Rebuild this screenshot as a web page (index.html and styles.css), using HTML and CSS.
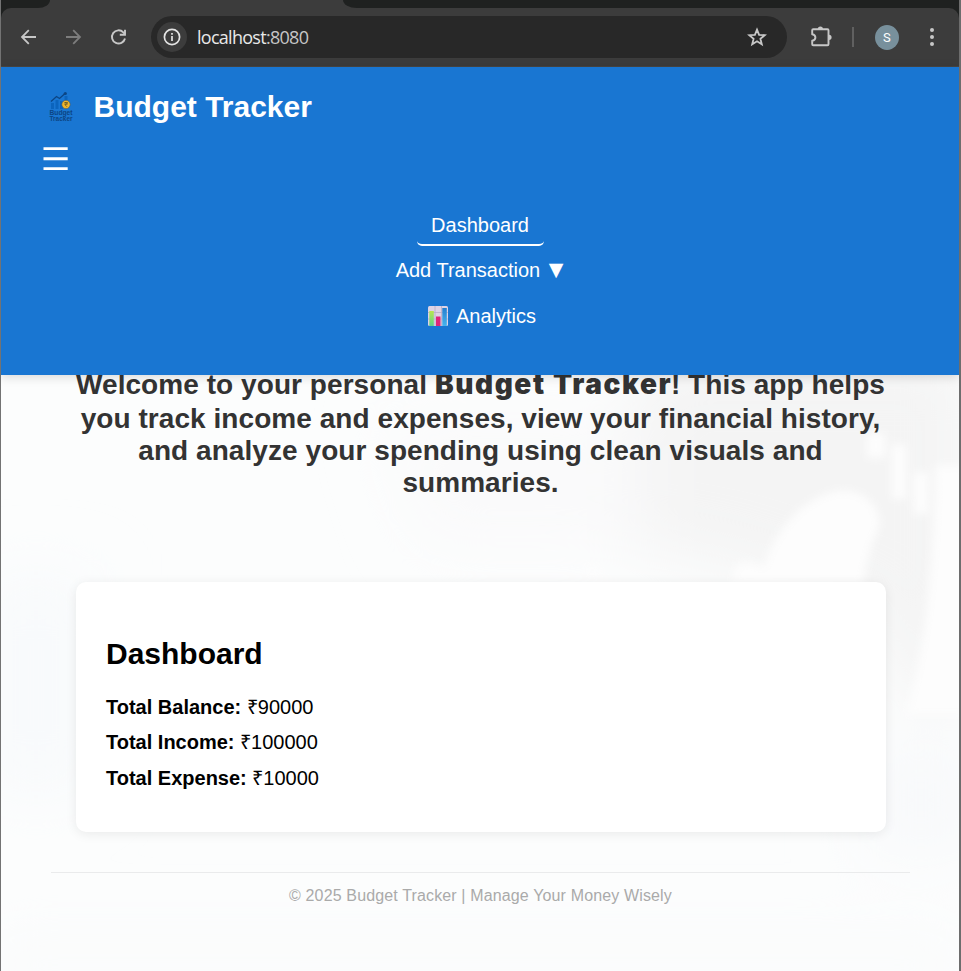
FILE: index.html
```html
<!DOCTYPE html>
<html lang="en">
<head>
<meta charset="utf-8">
<title>Budget Tracker</title>
<link rel="stylesheet" href="styles.css">
</head>
<body>
<div class="window">
  <div class="tabstrip"><div class="tab-left"></div><div class="tab-active"></div><div class="tab-rest"></div></div>
  <div class="toolbar">
    <svg class="ic back" width="20" height="20" viewBox="0 0 20 20" fill="none" stroke="#c7c7c7" stroke-width="1.8"><path d="M17 10H3.5M9.800 3.200L3 10l6.800 6.800"/></svg>
    <svg class="ic forward" width="20" height="20" viewBox="0 0 20 20" fill="none" stroke="#7d7d7d" stroke-width="1.8"><path d="M2 10h13.500M9.200 3.200L16 10l-6.800 6.800"/></svg>
    <svg class="ic reload" width="20" height="20" viewBox="0 0 20 20" fill="none" stroke="#c7c7c7" stroke-width="1.9"><path d="M16 11.500A6.600 6.600 0 1 1 14.300 5.300L16 7"/><path d="M16 2.700v5.100h-5.200"/></svg>
    <div class="omnibox">
      <span class="info"><svg width="18" height="18" viewBox="0 0 18 18" fill="none" stroke="#e3e3e3" stroke-width="1.7"><circle cx="9" cy="9" r="7.6"/><path d="M9 8v5M9 4.9v1.9"/></svg></span>
      <span class="url">localhost<span class="port">:8080</span></span>
      <svg class="star" width="20" height="20" viewBox="0 0 20 20" fill="none" stroke="#c7c7c7" stroke-width="1.8"><path d="M10 2.6l2.1 5.2 5.6.4-4.3 3.6 1.4 5.5-4.8-3-4.8 3 1.4-5.5-4.3-3.6 5.6-.4z"/></svg>
    </div>
    <svg class="ext" width="24" height="24" viewBox="0 0 24 24"><path d="M4.200 4.300h14.300q1 0 1 1v13.900q0 1-1 1H4.200q-1 0-1-1v-3.400q3.200-.6 3.200-3.300T3.200 9.200V5.300q0-1 1-1z" fill="none" stroke="#c7c7c7" stroke-width="1.9" stroke-linejoin="round"/><path d="M8.800 4a2.600 2.600 0 0 1 5.200 0zM20 9.700a2.600 2.600 0 0 1 0 5.200z" fill="#c7c7c7"/></svg>
    <span class="divider"></span>
    <span class="avatar">S</span>
    <svg class="kebab" width="6" height="20" viewBox="0 0 6 20" fill="#c7c7c7"><circle cx="3" cy="3" r="2"/><circle cx="3" cy="10" r="2"/><circle cx="3" cy="17" r="2"/></svg>
  </div>
  <header class="header">
    <div class="brand">
      <svg class="logo" width="26" height="32" viewBox="0 0 26 32">
        <g fill="#0b64bd"><path d="M3 12h3v6H3zM7.500 9h3v9h-3zM12 10h3v8h-3zM16.500 5h3v5h-3z"/></g>
        <path d="M3 10.500L8.500 5.500l3 2L17 2.500" fill="none" stroke="#0c4584" stroke-width="1.300"/><circle cx="17.300" cy="2.500" r="1.600" fill="#0c4584"/>
        <circle cx="18" cy="13.500" r="4.200" fill="#efb52b" stroke="#40566b" stroke-width=".6"/>
        <path d="M16.300 11.500h3.600M16.300 13h3.600M17 11.500q4 1.200 0 2.300l2 2" fill="none" stroke="#5c5128" stroke-width=".7"/>
        <text x="1.500" y="23.500" textLength="23" lengthAdjust="spacingAndGlyphs">Budget</text><text x="1.500" y="29.700" textLength="23" lengthAdjust="spacingAndGlyphs">Tracker</text>
      </svg>
      <h1>Budget Tracker</h1>
    </div>
    <svg class="menu" width="26" height="26" viewBox="0 0 26 26" fill="#fff"><path d="M.500 1.200h24.200v2.900H.500zM.500 11.300h24.200v2.900H.500zM.500 21.200h24.200v2.900H.500z"/></svg>
    <nav class="nav">
      <a class="link active">Dashboard</a>
      <a class="link add">Add Transaction <span class="caret">▼</span></a>
      <a class="link analytics"><svg width="20" height="20" viewBox="0 0 20 20"><defs><linearGradient id="g" x2="0" y2="1"><stop stop-color="#b7e84f"/><stop offset="1" stop-color="#5ed08a"/></linearGradient><linearGradient id="b" x2="0" y2="1"><stop stop-color="#237fd0"/><stop offset="1" stop-color="#46b4ee"/></linearGradient></defs><rect width="20" height="20" rx="1.500" fill="#ddd3e5"/><path d="M0 6.500h20M0 13h20M7 0v20M13.500 0v20" stroke="#b9adc6" stroke-width=".8"/><path d="M1.300 5h4.500v15H1.300z" fill="url(#g)"/><path d="M8 10.500h4.500V20H8z" fill="#e0257a"/><path d="M14.300 2h4.500v18h-4.500z" fill="url(#b)"/></svg>Analytics</a>
    </nav>
  </header>
  <main class="page">
    <svg class="backdrop" viewBox="0 0 958 596" preserveAspectRatio="none">
      <defs>
        <filter id="soft" x="-30%" y="-30%" width="160%" height="160%"><feGaussianBlur stdDeviation="32"/></filter>
        <filter id="edge"><feGaussianBlur stdDeviation="4"/></filter>
      </defs>
      <rect width="958" height="596" fill="#fcfdfd"/>
      <g filter="url(#soft)">
        <path d="M640-20H970V330H900L870 240 720 190 600 170z" fill="#f4f4f4"/>
        <path d="M380 40h260v130H420z" fill="#fafafb"/>
        <path d="M-20 200h110v220H-20z" fill="#f8fafc"/>
        <path d="M860 370h120v110H860z" fill="#f8f9fb"/>
        <path d="M-20 560h990v60H-20z" fill="#fafbfc"/>
      </g>
      <g fill="#fdfdfd" filter="url(#edge)">
        <path d="M735 190q12-6 28 3 8-32 34-57 35-29 62-17 22 12 19 34-12 24-16 57H730z"/>
        <path d="M891 69h14v55h-14zM913 97h14v42h-14zM866 58h18v25h-18zM935 90h30v250h-60q28-100 30-250z"/>
        <circle cx="591" cy="196" r="9"/>
      </g>
    </svg>
    <p class="intro">Welcome to your personal <strong>Budget Tracker</strong>! This app helps<br>you track income and expenses, view your financial history,<br>and analyze your spending using clean visuals and<br>summaries.</p>
    <section class="card">
      <h2>Dashboard</h2>
      <p><b>Total Balance:</b> ₹90000</p>
      <p><b>Total Income:</b> ₹100000</p>
      <p><b>Total Expense:</b> ₹10000</p>
    </section>
    <footer class="footer">© 2025 Budget Tracker | Manage Your Money Wisely</footer>
  </main>
</div>
</body>
</html>
```
FILE: styles.css
```css
* { box-sizing: border-box; }
body { margin: 0; font-family: "Liberation Sans", Arial, sans-serif; }
h1, h2, p { margin: 0; }
.window { width: 961px; height: 971px; overflow: hidden; display: flex; flex-direction: column; border-left: 1px solid #737373; border-right: 2px solid #6d6d6d; background: #1f2120; }
.tabstrip { height: 8px; flex: none; display: flex; background: #3c3c3c; }
.tab-left { width: 49px; background: #1f2120; border-bottom-right-radius: 12px 8px; }
.tab-active { width: 293px; }
.tab-rest { flex: 1; background: #1f2120; border-bottom-left-radius: 14px 8px; }
.toolbar { height: 59px; flex: none; display: flex; align-items: center; background: #3c3c3c; border-radius: 10px 10px 0 0; border-bottom: 1px solid #484644; padding: 0 24px 0 18px; }
.ic { flex: none; margin-right: 25px; }
.reload { margin-right: 22px; }
.omnibox { width: 636px; height: 42px; border-radius: 21px; background: #282828; display: flex; align-items: center; padding: 0 20px 0 6px; flex: none; }
.info { width: 30px; height: 30px; border-radius: 50%; background: #3c3c3c; display: flex; align-items: center; justify-content: center; }
.url { flex: 1; margin-left: 10px; font: 18px "Open Sans", "Noto Sans", sans-serif; letter-spacing: -.72px; color: #e8e8e8; }
.port { color: #c6c6c6; }
.ext { margin-left: 22px; flex: none; }
.divider { width: 2px; height: 20px; background: #606060; margin-left: 19px; }
.avatar { width: 25px; height: 25px; border-radius: 50%; background: #78909c; color: #fff; font: 13px/25px Roboto, sans-serif; text-align: center; margin-left: 21px; }
.kebab { margin-left: 30px; flex: none; }
.header { height: 308px; flex: none; background: #1976d2; color: #fff; padding: 24px 40px 0; box-shadow: 0 2px 10px rgba(0,0,0,.15); position: relative; z-index: 1; }
.brand { display: flex; align-items: center; height: 32px; padding-left: 7px; gap: 19.500px; }
.logo text { font: bold 6.500px "Liberation Sans", sans-serif; fill: #0c4584; }
.brand h1 { font-size: 30px; line-height: 34px; }
.menu { display: block; margin: 23px 0 0 2px; }
.nav { display: flex; flex-direction: column; align-items: center; margin-top: 33px; font-size: 20px; line-height: 24px; }
.link { display: flex; align-items: center; white-space: pre; }
.active { width: 127px; height: 41px; justify-content: center; border-bottom: 2px solid #fff; border-radius: 5px; }
.add { margin-top: 11px; height: 25px; }
.caret { font: 19px/22px "DejaVu Sans", sans-serif; margin: -2px 0 0 3px; padding-right: 1px; }
.analytics { margin-top: 22px; gap: 8px; height: 24px; padding-left: 4px; }
.page { flex: 1; position: relative; padding: 0 49px 0 50px; isolation: isolate; }
.backdrop { position: absolute; inset: 0; width: 100%; height: 100%; z-index: -1; }
.intro { height: 132px; margin-top: -8px; text-align: center; color: #333; font-size: 28px; line-height: 32px; font-weight: bold; letter-spacing: .06px; white-space: nowrap; }
.intro strong { display: inline-block; width: 236px; padding-bottom: 2px; text-align: left; font-family: Inter, "Liberation Sans", sans-serif; font-weight: 900; font-size: 28px; letter-spacing: 1.600px; line-height: 34px; }
.card { margin: 83px 24px 0 25px; height: 250px; padding: 54px 30px; background: #fff; border-radius: 10px; box-shadow: 0 2px 12px rgba(0,0,0,.08); color: #000; }
.card h2 { font-size: 30px; line-height: 35px; margin-bottom: 18.500px; }
.card p { font-size: 20px; line-height: 35.500px; }
.footer { margin-top: 40px; border-top: 1px solid #eaebec; padding-top: 13px; text-align: center; font-size: 16px; line-height: 19px; letter-spacing: .14px; color: #aaa; }
```
